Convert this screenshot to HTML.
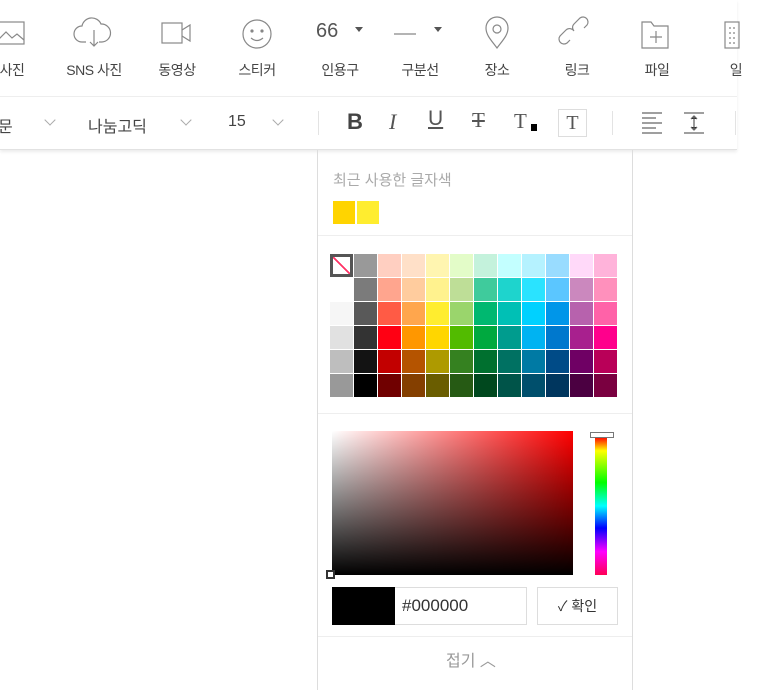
<!DOCTYPE html>
<html><head><meta charset="utf-8"><style>
*{margin:0;padding:0;box-sizing:border-box}
body{width:769px;height:682px;overflow:hidden;background:#fff;position:relative;font-family:"Liberation Sans","Noto Sans CJK KR",sans-serif;color:#444}
.a{position:absolute}
.lbl{position:absolute;top:60px;font-size:14px;color:#444;transform:translateX(-50%);white-space:nowrap;letter-spacing:-0.5px}
.t2{position:absolute;top:113px;font-size:16px;color:#444}
.chev{position:absolute;top:116px;width:8px;height:8px;border-right:1px solid #aaa;border-bottom:1px solid #aaa;transform:rotate(45deg)}
.vsep{position:absolute;top:111px;width:1px;height:24px;background:#e3e3e3}
.grid{position:absolute;left:330px;top:254px;display:grid;grid-template-columns:repeat(12,23px);grid-auto-rows:23px;gap:1px}
.grid div{width:23px;height:23px}
</style></head><body>
<div class="a" style="left:0;top:0;width:737px;height:150px;border-bottom:1px solid #e2e2e2;box-shadow:0 2px 3px rgba(0,0,0,.08)"></div>
<div class="a" style="left:0;top:96px;width:737px;height:1px;background:#eee"></div>
<svg class="a" style="left:0;top:0" width="769" height="60" fill="none" stroke="#888" stroke-width="1.2">
<rect x="-2" y="22" width="26" height="22"/><path d="M-2 40l8-8 6 6 5-4 7 6"/>
<path d="M86 42h-4a8 8 0 0 1 0-16 10 10 0 0 1 19-2 8 8 0 0 1 1 18h-3"/><path d="M94 30v16m-4-4 4 4 4-4"/>
<rect x="162" y="23" width="20" height="20"/><path d="M182 30l8-5v16l-8-5"/>
<circle cx="257" cy="34" r="14"/><circle cx="252" cy="31" r="1" fill="#777"/><circle cx="262" cy="31" r="1" fill="#777"/><path d="M251 38q6 5 12 0"/>
<path d="M394 34h22"/>
<path d="M497 48c-6-8-11-13-11-20a11 11 0 0 1 22 0c0 7-5 12-11 20z"/><circle cx="497" cy="29" r="4"/>
<path d="M570 40l-3 3a5 5 0 0 1-7-7l6-6a5 5 0 0 1 7 0M584 28l3-3a5 5 0 0 0-7-7l-6 6a5 5 0 0 0 0 7"/>
<path d="M642 22h9l3 4h14v22h-26z"/><path d="M656 31v12m-6-6h12"/>
<rect x="725" y="22" width="14" height="26"/><path d="M729 28h2m2 0h2m-6 5h2m2 0h2m-6 5h2m2 0h2m-6 5h2m2 0h2"/>
</svg>
<div class="a" style="left:316px;top:20px;font-size:20px;color:#555">66</div>
<div class="a" style="left:355px;top:27px;border:4px solid transparent;border-top:5px solid #555"></div>
<div class="a" style="left:434px;top:27px;border:4px solid transparent;border-top:5px solid #555"></div>
<div class="lbl" style="left:12px">사진</div>
<div class="lbl" style="left:94px">SNS 사진</div>
<div class="lbl" style="left:177px">동영상</div>
<div class="lbl" style="left:257px">스티커</div>
<div class="lbl" style="left:340px">인용구</div>
<div class="lbl" style="left:420px">구분선</div>
<div class="lbl" style="left:497px">장소</div>
<div class="lbl" style="left:577px">링크</div>
<div class="lbl" style="left:657px">파일</div>
<div class="lbl" style="left:736px">일</div>
<div class="t2" style="left:-2px">문</div><div class="chev" style="left:46px"></div>
<div class="t2" style="left:88px">나눔고딕</div><div class="chev" style="left:182px"></div>
<div class="t2" style="left:228px">15</div><div class="chev" style="left:274px"></div>
<div class="vsep" style="left:318px"></div>
<div class="a" style="left:347px;top:109px;font-size:22px;font-weight:bold;color:#444">B</div>
<div class="a" style="left:389px;top:109px;font-size:22px;font-style:italic;font-family:'Liberation Serif',serif;color:#555">I</div>
<div class="a" style="left:428px;top:107px;font-size:21px;color:#555;text-decoration:underline">U</div>
<div class="a" style="left:472px;top:108px;font-size:21px;color:#555;font-family:'Liberation Serif',serif;text-decoration:line-through">T</div>
<div class="a" style="left:514px;top:109px;font-size:21px;color:#555;font-family:'Liberation Serif',serif">T</div>
<div class="a" style="left:531px;top:124px;width:6px;height:7px;background:#000"></div>
<div class="a" style="left:558px;top:109px;width:29px;height:28px;border:1px solid #ddd;font-size:20px;color:#555;font-family:'Liberation Serif',serif;text-align:center;line-height:26px">T</div>
<div class="vsep" style="left:612px"></div>
<svg class="a" style="left:640px;top:110px" width="70" height="26" stroke="#666" stroke-width="1.3"><path d="M2 3h20M2 8h14M2 13h20M2 18h14M2 23h20"/><path d="M44 3h20M44 23h20M54 6v14m-3-11 3-3 3 3m-6 8 3 3 3-3"/></svg>
<div class="vsep" style="left:735px"></div>
<div class="a" style="left:317px;top:150px;width:316px;height:540px;border-left:1px solid #ddd;border-right:1px solid #ddd"></div>
<div class="a" style="left:333px;top:169px;font-size:15px;color:#aaa">최근 사용한 글자색</div>
<div class="a" style="left:333px;top:201px;width:22px;height:23px;background:#ffd400"></div>
<div class="a" style="left:357px;top:201px;width:22px;height:23px;background:#ffed2f"></div>
<div class="a" style="left:318px;top:235px;width:314px;height:1px;background:#eee"></div>
<div class="grid">
<div style="border:3px solid #555;background:linear-gradient(to top right,#fff 46%,#f36 47%,#f36 53%,#fff 54%)"></div><div style="background:#999"></div><div style="background:#ffcfc1"></div><div style="background:#ffe0c8"></div><div style="background:#fff5b0"></div><div style="background:#e3fcc8"></div><div style="background:#c4f2dc"></div><div style="background:#c3ffff"></div><div style="background:#b5f2ff"></div><div style="background:#99dcff"></div><div style="background:#ffd9f9"></div><div style="background:#ffb3da"></div>
<div style="background:#fff"></div><div style="background:#7b7b7b"></div><div style="background:#ffa58e"></div><div style="background:#ffcc9e"></div><div style="background:#fff28e"></div><div style="background:#bede97"></div><div style="background:#3fcb9c"></div><div style="background:#1ed4cd"></div><div style="background:#2ae3ff"></div><div style="background:#5bc6ff"></div><div style="background:#cb88be"></div><div style="background:#ff90bc"></div>
<div style="background:#f6f6f6"></div><div style="background:#595959"></div><div style="background:#ff5b45"></div><div style="background:#ffa64d"></div><div style="background:#ffed2f"></div><div style="background:#9ad56c"></div><div style="background:#00b870"></div><div style="background:#00c0b5"></div><div style="background:#00d1ff"></div><div style="background:#0096e9"></div><div style="background:#b762ad"></div><div style="background:#ff62a8"></div>
<div style="background:#e1e1e1"></div><div style="background:#333"></div><div style="background:#ff0013"></div><div style="background:#ff9700"></div><div style="background:#ffd600"></div><div style="background:#52bb00"></div><div style="background:#00a93f"></div><div style="background:#009c8e"></div><div style="background:#00b3f2"></div><div style="background:#0078cd"></div><div style="background:#a8208e"></div><div style="background:#ff008c"></div>
<div style="background:#bebebe"></div><div style="background:#131313"></div><div style="background:#c20000"></div><div style="background:#b55400"></div><div style="background:#ae9a00"></div><div style="background:#358120"></div><div style="background:#00702f"></div><div style="background:#007162"></div><div style="background:#007aa4"></div><div style="background:#004b87"></div><div style="background:#6f0064"></div><div style="background:#b90058"></div>
<div style="background:#999"></div><div style="background:#000"></div><div style="background:#700000"></div><div style="background:#843f00"></div><div style="background:#6a5d00"></div><div style="background:#265a14"></div><div style="background:#00481e"></div><div style="background:#005449"></div><div style="background:#004f6c"></div><div style="background:#00365e"></div><div style="background:#4b0041"></div><div style="background:#7a0040"></div>
</div>
<div class="a" style="left:318px;top:413px;width:314px;height:1px;background:#eee"></div>
<div class="a" style="left:332px;top:431px;width:241px;height:144px;background:linear-gradient(to top,#000,rgba(0,0,0,0)),linear-gradient(to right,#fff,#f00)"></div>
<div class="a" style="left:326px;top:570px;width:9px;height:9px;border:2px solid #333;background:#fff"></div>
<div class="a" style="left:595px;top:437px;width:12px;height:138px;background:linear-gradient(to bottom,#f00,#ff0 10%,#0f0 33%,#0ff 50%,#00f 66%,#f0f 83%,#f05)"></div>
<div class="a" style="left:590px;top:432px;width:24px;height:6px;border:1px solid #777;background:#fff"></div>
<div class="a" style="left:332px;top:587px;width:195px;height:38px;border:1px solid #ddd"></div>
<div class="a" style="left:332px;top:587px;width:63px;height:38px;background:#000"></div>
<div class="a" style="left:402px;top:596px;font-size:17px;color:#333">#000000</div>
<div class="a" style="left:537px;top:587px;width:81px;height:38px;border:1px solid #ddd;font-size:14px;color:#333;line-height:36px;text-align:center">✓ 확인</div>
<div class="a" style="left:318px;top:636px;width:314px;height:1px;background:#eee"></div>
<div class="a" style="left:446px;top:647px;font-size:16px;color:#999">접기 ︿</div>
</body></html>
